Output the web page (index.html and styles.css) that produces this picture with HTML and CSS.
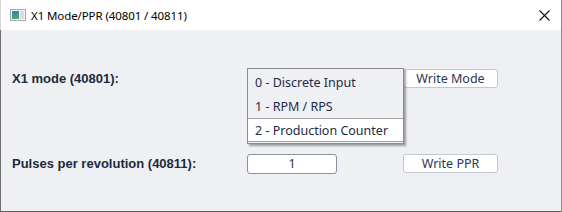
FILE: index.html
```html
<!DOCTYPE html>
<html lang="en">
<head>
    <meta charset="UTF-8">
    <title>X1 Mode/PPR (40801 / 40811)</title>
    <link rel="stylesheet" href="styles.css">
</head>
<body>

<div class="window">
    <div class="titlebar">
        <svg class="app-icon" width="16" height="12" viewBox="0 0 16 12">
            <defs>
                <linearGradient id="g" x1="0" y1="0" x2="0" y2="1">
                    <stop offset="0" stop-color="#3f7fb0"/>
                    <stop offset="1" stop-color="#4fa86a"/>
                </linearGradient>
            </defs>
            <rect x="0.5" y="0.5" width="15" height="11" fill="#f4f4f4" stroke="#a8a8a8"/>
            <rect x="2" y="2" width="7" height="8" fill="url(#g)"/>
            <rect x="10" y="2" width="4" height="8" fill="#dcdcdc"/>
        </svg>
        <span class="title">X1 Mode/PPR (40801 / 40811)</span>
        <svg class="close" width="11" height="11" viewBox="0 0 11 11">
            <path d="M0.5 0.5 L10.5 10.5 M10.5 0.5 L0.5 10.5" stroke="#111" stroke-width="1.1"/>
        </svg>
    </div>

    <div class="client">
        <div class="form">
            <label class="field-label">X1 mode (40801):</label>
            <div class="combo"></div>
            <span></span>
            <button class="btn">Write Mode</button>

            <label class="field-label">Pulses per revolution (40811):</label>
            <input class="num" type="text" value="1">
            <span></span>
            <button class="btn">Write PPR</button>
        </div>

        <!-- open dropdown of the X1 mode combo -->
        <ul class="dropdown">
            <li>0 - Discrete Input</li>
            <li>1 - RPM / RPS</li>
            <li class="selected">2 - Production Counter</li>
        </ul>
    </div>
</div>

</body>
</html>
```

FILE: styles.css
```css
body {
    margin: 0;
    padding: 0;
    background-color: #eff0f4;
    font-family: "Noto Sans", "Open Sans", sans-serif;
}
.window {
    width: 562px;
    height: 212px;
    display: flex;
    flex-direction: column;
    box-sizing: border-box;
    border-right: 1px solid #8a8a8a;
}
.titlebar {
    height: 30px;
    background-color: #ffffff;
    display: flex;
    align-items: center;
    padding-left: 9px;
    border-left: 1px solid #d6d6d6;
    box-sizing: border-box;
}
.app-icon {
    margin-right: 5px;
}
.title {
    font-size: 11.5px;
    color: #000;
    flex-grow: 1;
    letter-spacing: -0.1px;
}
.close {
    margin-right: 11px;
    margin-top: 1px;
}
.client {
    flex-grow: 1;
    position: relative;
    background-color: #eff0f4;
    border-left: 1px solid #6e6e6e;
    border-bottom: 1px solid #5c5c5c;
}
.form {
    display: grid;
    grid-template-columns: 235px 90px 66px 95px;
    grid-template-rows: 19px 19px;
    row-gap: 66px;
    align-items: center;
    padding: 39px 0 0 11px;
}
.field-label {
    font-family: "Liberation Sans", Arial, sans-serif;
    font-weight: bold;
    font-size: 13px;
    color: #1c2a3e;
}
.combo {
    height: 19px;
}
.btn {
    height: 19px;
    padding: 0;
    background-color: #ffffff;
    border: 1px solid #c3c7d0;
    border-radius: 3px;
    font-family: "Noto Sans", "Open Sans", sans-serif;
    font-size: 12.5px;
    color: #2c3552;
    line-height: 16px;
}
.num {
    height: 20px;
    box-sizing: border-box;
    margin: 0;
    padding: 0;
    background-color: #ffffff;
    border: 1px solid #8d92a3;
    border-radius: 3px;
    text-align: center;
    font-family: "Noto Sans", "Open Sans", sans-serif;
    font-size: 12.5px;
    color: #2c3552;
}
.dropdown {
    position: absolute;
    left: 246px;
    top: 38px;
    width: 155px;
    margin: 0;
    padding: 1px 0;
    list-style: none;
    background-color: #eff0f4;
    border: 1px solid #8c8c8c;
    box-shadow: 2px 2px 2px rgba(0, 0, 0, 0.35);
}
.dropdown li {
    height: 24px;
    box-sizing: border-box;
    padding-left: 7px;
    line-height: 25px;
    font-size: 12.5px;
    color: #1e2b48;
}
.dropdown li.selected {
    background-color: #ffffff;
    border: 1px solid #a2a2a2;
    border-left: none;
    border-right: none;
    line-height: 23px;
}
```
